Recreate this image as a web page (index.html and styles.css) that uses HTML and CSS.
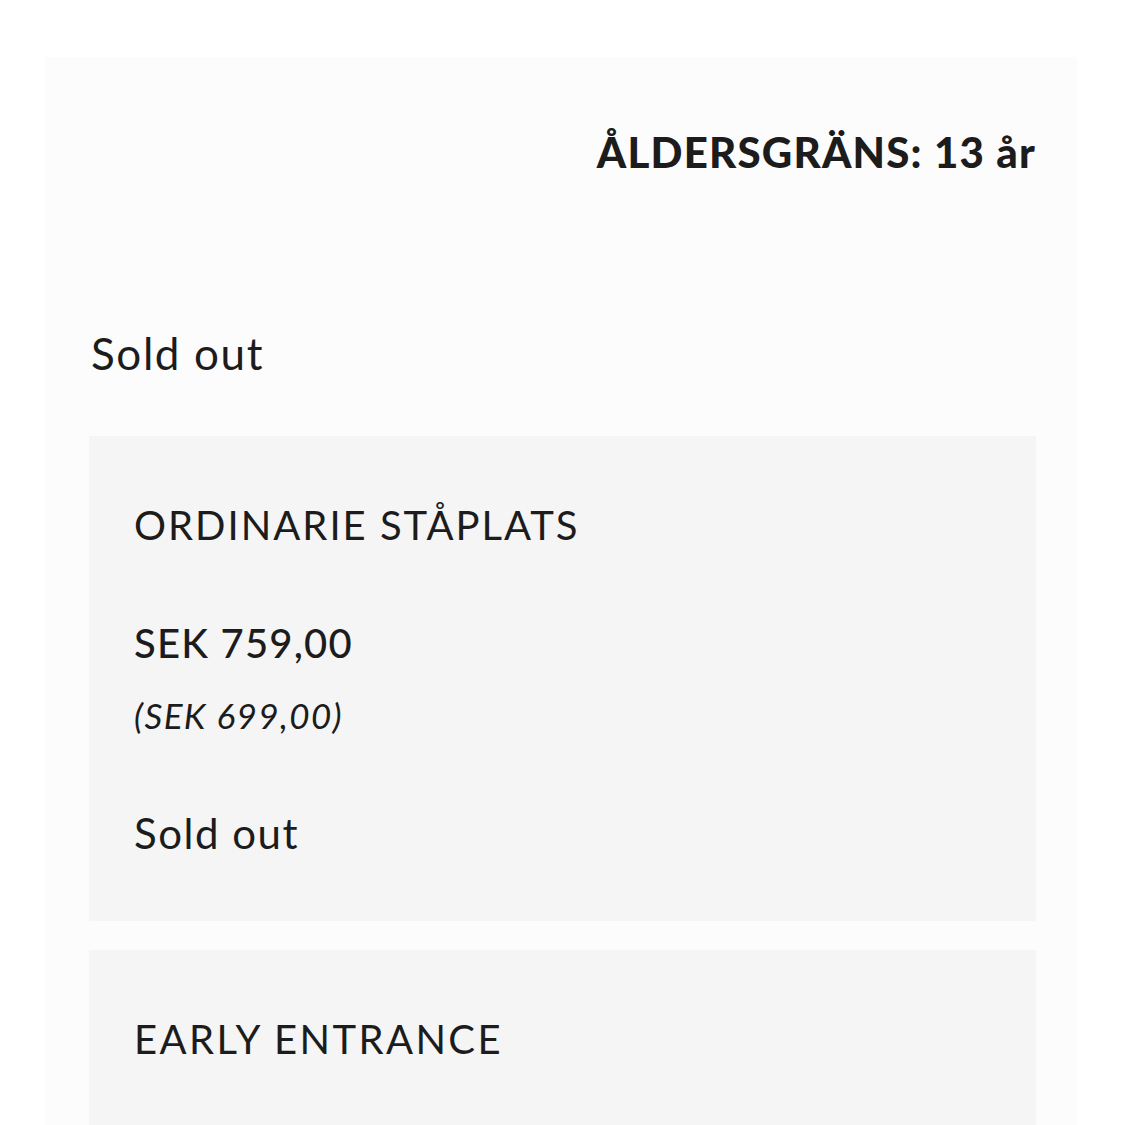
FILE: index.html
```html
<!doctype html>
<html>
	<head>
		<meta http-equiv="Content-Type" content="text/html;charset=UTF-8"/>
		<title>Biljetter</title>
		<link rel="stylesheet" href="styles.css">
	</head>
<body>
	<div class="panel">
		<div class="age">ÅLDERSGRÄNS: 13 år</div>
		<div class="status">Sold out</div>
		<div class="ticket">
			<div class="ticket-name">ORDINARIE STÅPLATS</div>
			<div class="price">SEK 759,00</div>
			<div class="price-sub">(SEK 699,00)</div>
			<div class="ticket-status">Sold out</div>
		</div>
		<div class="ticket">
			<div class="ticket-name">EARLY ENTRANCE</div>
		</div>
	</div>
</body>
</html>
```
FILE: styles.css
```css
*{margin:0;padding:0;box-sizing:border-box;}
html,body{background:#fff;}
body{padding:57px 48px 0 45px;font-family:"Lato","Liberation Sans",sans-serif;color:#1c1c1c;height:1125px;overflow:hidden;}
.panel{background:#fcfcfc;padding:70px 41px 0 44px;min-height:1100px;}
.age{text-align:right;font-size:42px;font-weight:900;line-height:50px;letter-spacing:1.2px;}
.status{font-size:44px;line-height:52px;margin-top:150px;padding-left:2px;letter-spacing:1.6px;}
.ticket{background:#f5f5f5;padding:65px 45px 63px;margin-top:57px;}
.ticket + .ticket{margin-top:29px;}
.ticket-name{font-size:40px;line-height:48px;letter-spacing:2px;}
.ticket + .ticket .ticket-name{letter-spacing:2.4px;}
.price{font-size:40px;line-height:48px;margin-top:70px;font-weight:500;letter-spacing:1.2px;}
.price-sub{font-size:35px;line-height:44px;font-style:italic;margin-top:26px;letter-spacing:1.4px;}
.ticket-status{font-size:42px;line-height:50px;margin-top:71px;letter-spacing:1.5px;}
```
